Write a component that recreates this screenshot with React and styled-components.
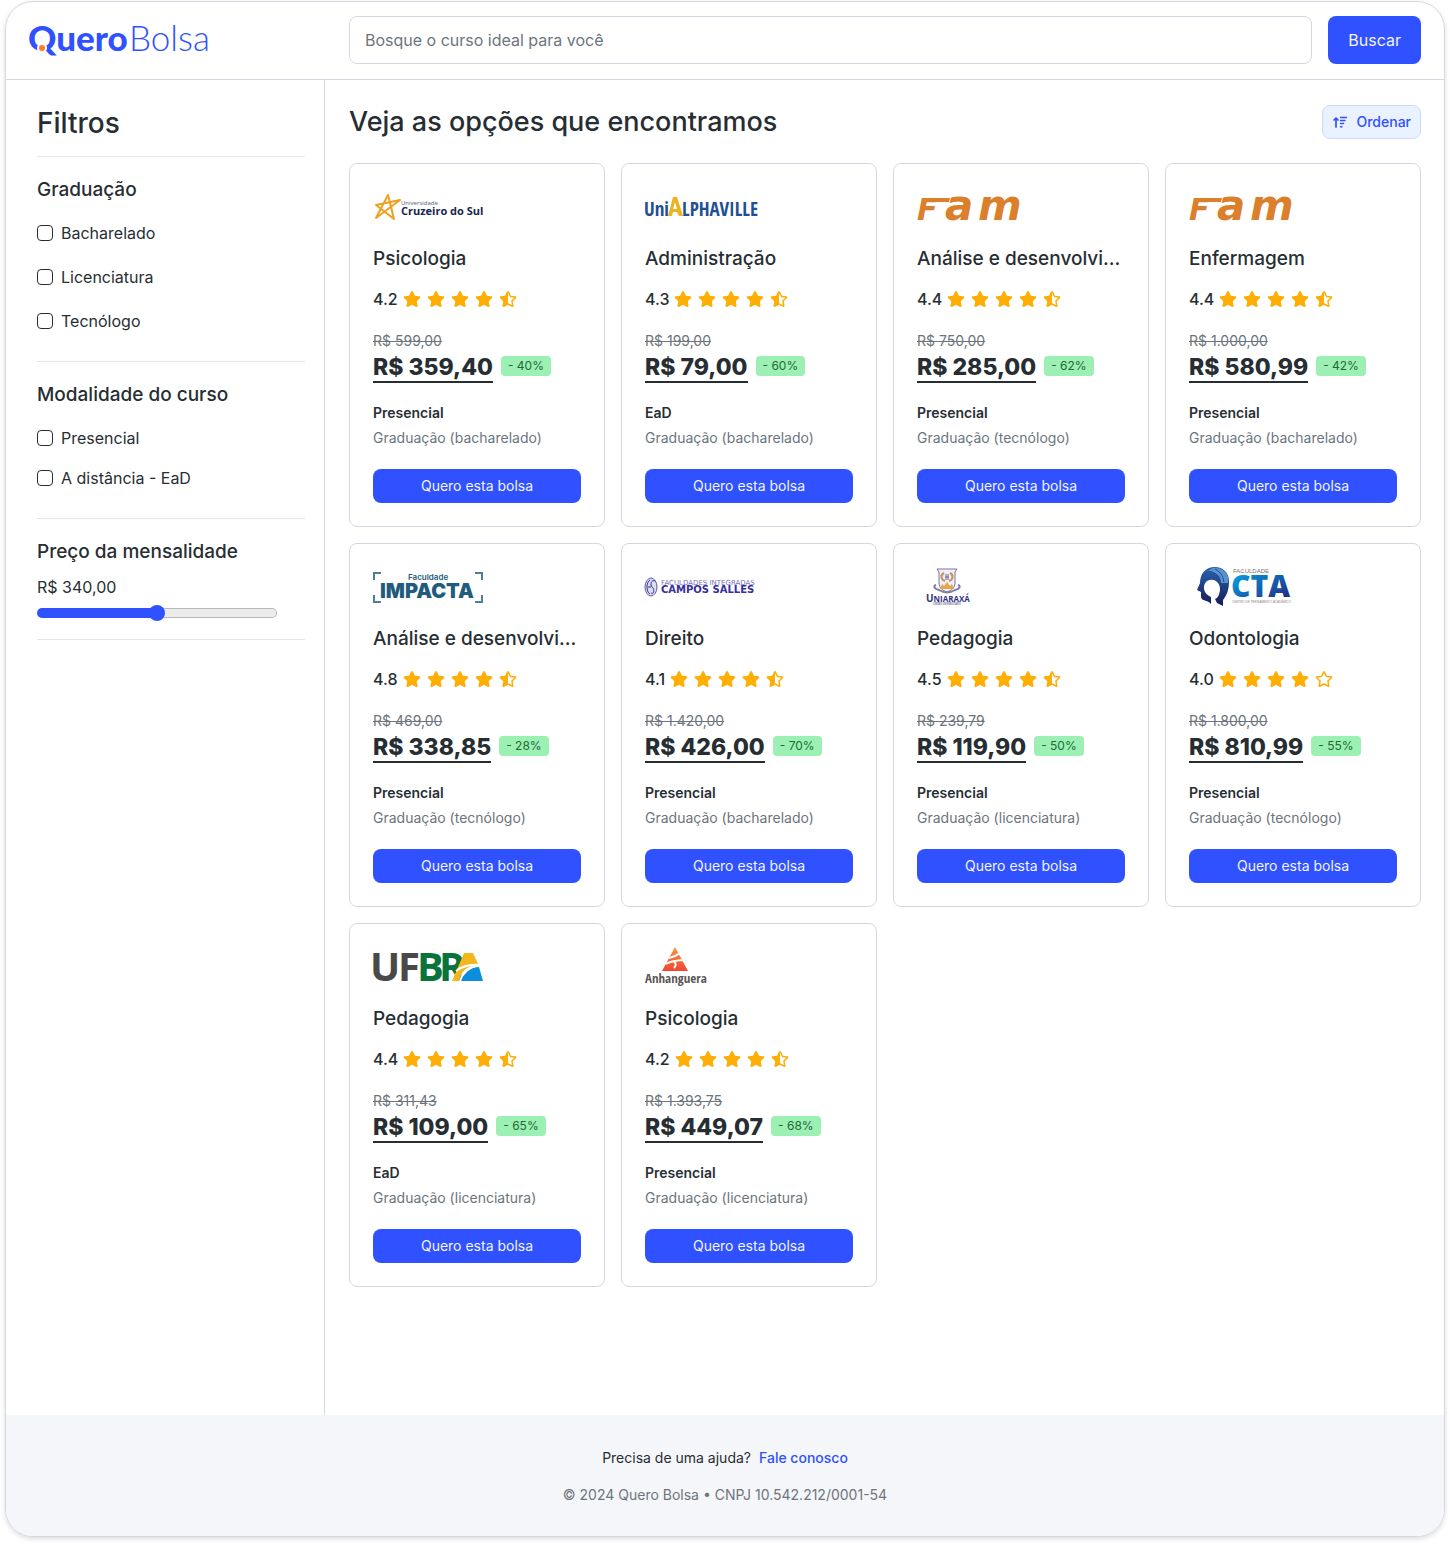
import React, { useState } from "react";
import styled, { createGlobalStyle } from "styled-components";
import { FaStar, FaStarHalfAlt, FaRegStar } from "react-icons/fa";

const color = {
  ink: "#272e33",
  muted: "#6c757d",
  blue: "#2f51ff",
  border: "#d4d8e2",
  rule: "#e5e7eb",
  star: "#ffae06",
};

const GlobalStyle = createGlobalStyle`
  *, *::before, *::after { box-sizing: border-box; }
  body {
    margin: 0;
    background: #fff;
    color: ${color.ink};
    font-family: Inter, "Liberation Sans", sans-serif;
    font-size: 16px;
  }
  h1, h2, h3, p, ul, fieldset { margin: 0; padding: 0; border: 0; }
  button, input { font: inherit; }
`;

const Page = styled.div`
  padding: 1px 5px 9px;
`;

const Frame = styled.div`
  border: 1px solid ${color.border};
  border-radius: 28px;
  overflow: hidden;
  box-shadow: 0 2px 5px rgba(0, 0, 0, 0.14);
`;

const Header = styled.header`
  display: flex;
  align-items: center;
  padding: 14px 23px 15px;
  border-bottom: 1px solid ${color.border};
`;

const Brand = styled.a`
  flex: 0 0 320px;
  height: 48px;
  svg { display: block; }
`;

const SearchForm = styled.form`
  flex: 1;
  display: flex;
  gap: 16px;
`;

const SearchInput = styled.input`
  flex: 1;
  min-width: 0;
  height: 48px;
  padding: 0 15px;
  border: 1px solid ${color.border};
  border-radius: 8px;
  background: #fff;
  color: ${color.ink};
  &::placeholder { color: ${color.muted}; opacity: 1; }
`;

const PrimaryButton = styled.button`
  height: ${(p) => (p.$small ? 34 : 48)}px;
  padding: ${(p) => (p.$small ? "0 20px 2px" : "0 20px")};
  border: 0;
  border-radius: 8px;
  background: ${color.blue};
  color: #f2f5ff;
  font-size: ${(p) => (p.$small ? 14 : 16)}px;
  cursor: pointer;
`;

const Layout = styled.div`
  display: grid;
  grid-template-columns: 319px 1fr;
`;

const Sidebar = styled.aside`
  padding: 25px 19px 24px 31px;
  border-right: 1px solid ${color.border};
`;

const Heading = styled.h1`
  font-size: ${(p) => (p.$large ? 28 : 27)}px;
  line-height: 36px;
  font-weight: 500;
`;

const FilterTop = styled.div`
  padding-bottom: 15px;
  border-bottom: 1px solid ${color.rule};
`;

const FilterGroup = styled.fieldset`
  min-width: 0;
  padding: 21px 0 ${(p) => p.$bottom}px;
  border-bottom: 1px solid ${color.rule};
`;

const FilterTitle = styled.legend`
  float: left;
  width: 100%;
  padding: 0;
  font-size: 19px;
  line-height: 24px;
  font-weight: 500;
`;

const Options = styled.div`
  clear: both;
  display: flex;
  flex-direction: column;
  gap: ${(p) => p.$gap}px;
  padding-top: 19px;
`;

const Option = styled.label`
  display: flex;
  align-items: center;
  gap: 8px;
  line-height: 24px;
`;

const Checkbox = styled.input`
  appearance: none;
  width: 16px;
  height: 16px;
  margin: 0;
  border: 1px solid ${color.ink};
  border-radius: 4px;
  &:checked { background: ${color.blue}; border-color: ${color.blue}; }
`;

const PriceFilter = styled.label`
  clear: both;
  display: flex;
  flex-direction: column;
  padding-top: 11px;
  line-height: 24px;
`;

const Range = styled.input`
  appearance: none;
  width: 240px;
  height: 16px;
  margin: 6px 0 0;
  background: transparent;
  &::-webkit-slider-runnable-track {
    height: 10px;
    border: 1px solid transparent;
    border-radius: 5px;
    background:
      linear-gradient(${color.blue}, ${color.blue}) 0 0 / var(--fill) 100% no-repeat border-box,
      linear-gradient(#ececec, #ececec) padding-box,
      linear-gradient(#b8b8b8, #b8b8b8) border-box;
  }
  &::-webkit-slider-thumb {
    appearance: none;
    width: 16px;
    height: 16px;
    margin-top: -4px;
    border-radius: 50%;
    background: ${color.blue};
  }
`;

const Main = styled.main`
  min-width: 0;
  padding: 24px 23px 128px 24px;
`;

const MainTop = styled.div`
  display: flex;
  align-items: center;
  justify-content: space-between;
  padding-bottom: 23px;
`;

const SortButton = styled.button`
  display: flex;
  align-items: center;
  gap: 8px;
  height: 34px;
  padding: 0 9px 2px;
  border: 1px solid #c8dbfd;
  border-radius: 8px;
  background: #ebf2ff;
  color: ${color.blue};
  font-size: 14px;
  font-weight: 500;
`;

const Grid = styled.ul`
  display: grid;
  grid-template-columns: repeat(auto-fill, minmax(240px, 1fr));
  gap: 16px;
  list-style: none;
`;

const Card = styled.li`
  display: flex;
  flex-direction: column;
  min-width: 0;
  padding: 23px;
  border: 1px solid ${color.border};
  border-radius: 8px;
`;

const LogoBox = styled.div`
  height: 40px;
  svg { display: block; overflow: visible; }
`;

const CourseName = styled.h2`
  margin-top: 17px;
  font-size: 19px;
  line-height: 30px;
  font-weight: 500;
  white-space: nowrap;
  overflow: hidden;
  text-overflow: ellipsis;
`;

const Rating = styled.div`
  display: flex;
  align-items: center;
  gap: 5px;
  margin-top: 13px;
  line-height: 24px;
  font-weight: 500;
`;

const Stars = styled.span`
  display: flex;
  gap: 6px;
  color: ${color.star};
  svg { display: block; width: 18px; height: 16px; }
`;

const OldPrice = styled.s`
  margin-top: 20px;
  color: ${color.muted};
  font-size: 14px;
  line-height: 20px;
`;

const PriceRow = styled.div`
  display: flex;
  align-items: flex-start;
  gap: 8px;
  height: 32px;
`;

const Price = styled.strong`
  height: 32px;
  border-bottom: 2px solid ${color.ink};
  font-size: 23px;
  line-height: 32px;
  font-weight: 800;
`;

const Discount = styled.span`
  margin-top: 5px;
  padding: 0 7px;
  border-radius: 4px;
  background: #9df0b4;
  color: #1c6b36;
  font-size: 12px;
  line-height: 20px;
`;

const Mode = styled.strong`
  margin-top: 20px;
  font-size: 14px;
  line-height: 20px;
  font-weight: 600;
`;

const Degree = styled.span`
  margin: 5px 0 21px;
  color: ${color.muted};
  font-size: 14px;
  line-height: 20px;
`;

const Footer = styled.footer`
  display: flex;
  flex-direction: column;
  align-items: center;
  gap: 17px;
  padding: 33px 24px 31px;
  background: #f5f6f9;
  font-size: 14px;
  line-height: 20px;
`;

const HelpLine = styled.p`
  display: flex;
  gap: 8px;
`;

const HelpLink = styled.a`
  color: ${color.blue};
  font-weight: 500;
  text-decoration: none;
`;

const Legal = styled.p`
  color: ${color.muted};
`;

function QueroBolsaLogo() {
  return (
    <svg width="190" height="48" viewBox="0 0 190 48" fill={color.blue} fontFamily="Lato, sans-serif">
      <text x="-1" y="35" fontSize="35" fontWeight="900">Quero</text>
      <text x="100" y="35" fontSize="35" fontWeight="300">Bolsa</text>
      <circle cx="13" cy="32" r="5" fill="#fff" />
      <circle cx="13" cy="32" r="3" fill="#ff7a2e" />
    </svg>
  );
}

function CruzeiroLogo() {
  return (
    <svg width="110" height="40" viewBox="0 0 110 40" role="img" aria-label="Cruzeiro do Sul">
      <path d="M15 8 L21 32 L3 18 L27 13 L3 31 Z" fill="none" stroke="#eda320" strokeWidth="2" strokeLinejoin="round" />
      <text x="28" y="18" fontFamily="Open Sans, sans-serif" fontSize="6" fill="#4b5a7c">Universidade</text>
      <text x="28" y="28" fontFamily="Open Sans, sans-serif" fontSize="11" fontWeight="700" fill="#16264f">Cruzeiro do Sul</text>
    </svg>
  );
}

function AlphavilleLogo() {
  return (
    <svg width="110" height="40" viewBox="0 0 110 40" fontFamily="Open Sans Condensed, Open Sans, sans-serif" fontSize="19" fontWeight="700" fill="#214f93">
      <text x="-1" y="29">Uni</text>
      <path d="M28 10 H32 L38 29 H34 L32 25 H28 L27 29 H23 Z M30 15 L28 22 H32 Z" fill="#ecb220" fillRule="evenodd" />
      <text x="37" y="29">LPHAVILLE</text>
    </svg>
  );
}

function FamLogo() {
  return (
    <svg width="110" height="40" viewBox="0 0 110 40" fontFamily="DejaVu Sans, sans-serif" fontWeight="700" fontStyle="italic" fill="#dc7f2c">
      <text x="0" y="33" fontSize="30">F</text>
      <path d="M18 11 H33 L32 15 H17 Z" />
      <text x="28" y="33" fontSize="42">a</text>
      <text x="61" y="33" fontSize="42">m</text>
    </svg>
  );
}

function ImpactaLogo() {
  return (
    <svg width="110" height="40" viewBox="0 0 110 40" fill="#215c7c" fontFamily="Inter, sans-serif">
      <path d="M1 13 V6 H8 M102 6 H109 V13 M1 28 V35 H8 M102 35 H109 V28" fill="none" stroke="#4d7f98" strokeWidth="2" />
      <text x="35" y="13" fontSize="8" fontWeight="600">Faculdade</text>
      <text x="7" y="31" fontSize="20" fontWeight="900">IMPACTA</text>
    </svg>
  );
}

function CamposSallesLogo() {
  return (
    <svg width="110" height="40" viewBox="0 0 110 40" fontFamily="DejaVu Sans, sans-serif">
      <ellipse cx="6" cy="20" rx="6" ry="9" fill="#dcdcf2" stroke="#5c55a8" strokeWidth="1" />
      <path d="M5 13 C1 15 1 25 5 27 M10 14 C6 12 5 18 7 20 C10 22 9 28 6 26 M3 20 H6" fill="none" stroke="#352e93" strokeWidth="1" />
      <text x="16" y="18" fontSize="7" fill="#7771b9">FACULDADES INTEGRADAS</text>
      <text x="16" y="26" fontSize="10" fontWeight="700" fill="#352e9b">CAMPOS SALLES</text>
    </svg>
  );
}

function UniaraxaLogo() {
  return (
    <svg width="60" height="40" viewBox="0 0 60 40">
      <path d="M20 2 H40 L38 5 V17 Q37 23 30 25 Q23 23 22 17 V5 Z" fill="#f0eff5" stroke="#77789f" strokeWidth="1" />
      <path d="M27 6 C23 8 24 13 28 14 M33 6 C37 8 36 13 32 14" fill="none" stroke="#c99159" strokeWidth="2" />
      <path d="M29 7 V13 M31 7 V13 M28 10 H32" stroke="#6b6b9b" strokeWidth="1" />
      <path d="M23 22 L25 17 L27 19 L30 15 L33 19 L35 17 L37 22 Z" fill="#e9a54e" />
      <path d="M19 18 C16 19 17 22 22 23 Q30 28 38 23 C43 22 44 19 41 18" fill="none" stroke="#7f7fa5" strokeWidth="2" />
      <text x="9" y="35" fontFamily="Open Sans, sans-serif" fontWeight="700" fontSize="8" fill="#33347f"><tspan fontSize="10">U</tspan>NIARAXÁ</text>
      <text x="16" y="38" fontFamily="Open Sans Condensed, Open Sans, sans-serif" fontSize="3" fill="#777aa5">CENTRO UNIVERSITÁRIO</text>
    </svg>
  );
}

function CtaLogo() {
  return (
    <svg width="110" height="40" viewBox="0 0 110 40">
      <defs>
        <linearGradient id="cta-text" x1="0" y1="0" x2="1" y2="1">
          <stop offset="0.2" stopColor="#0796d8" />
          <stop offset="1" stopColor="#251b78" />
        </linearGradient>
        <linearGradient id="cta-head" x1="0" y1="0" x2="0" y2="1">
          <stop offset="0" stopColor="#2963ae" />
          <stop offset="1" stopColor="#171a58" />
        </linearGradient>
      </defs>
      <path d="M26 0 C16 0 11 7 11 16 L8 23 L12 25 V30 C13 35 18 32 22 37 L22 30 C14 27 13 18 18 14 C24 11 30 14 31 21 C31 27 29 31 26 32 L28 36 L34 39 L34 33 C38 28 40 22 40 14 C40 6 34 0 26 0 Z" fill="url(#cta-head)" />
      <path d="M24 1 C35 0 41 8 39 16 H32 C32 9 28 5 18 4 Z" fill="#5d91ce" />
      <path d="M19 4 Q29 5 31 15 M26 2 Q34 6 35 15" stroke="#244f9a" strokeWidth="1" fill="none" />
      <text x="44" y="6" fontFamily="Liberation Sans, sans-serif" fontSize="6" fill="#777">FACULDADE</text>
      <text x="42" y="30" fontFamily="Open Sans, sans-serif" fontSize="30" fontWeight="800" fill="url(#cta-text)">CTA</text>
      <text x="43" y="36" fontFamily="Liberation Sans, sans-serif" fontSize="3" fill="#888">CENTRO DE TREINAMENTO ACADÊMICO</text>
    </svg>
  );
}

function UfbraLogo() {
  return (
    <svg width="110" height="40" viewBox="0 0 110 40" fontFamily="Open Sans, sans-serif" fontSize="40" fontWeight="700">
      <text x="-3" y="34" fill="#4b4947">U</text>
      <text x="25" y="34" fill="#4b4947">F</text>
      <text x="44" y="34" fill="#08733a">B</text>
      <text x="66" y="34" fill="#08733a">R</text>
      <path d="M91 6 H100 L106 19 C95 17 88 24 86 34 H79 Z" fill="#f3b61d" />
      <path d="M88 34 C90 25 98 20 106 20 L110 34 Z" fill="#0b8fdc" />
      <path d="M83 24 Q92 17 106 18 Q91 21 87 34" fill="none" stroke="#fff" strokeWidth="2" />
    </svg>
  );
}

function AnhangueraLogo() {
  return (
    <svg width="62" height="40" viewBox="0 0 62 40">
      <defs>
        <linearGradient id="anhanguera" x1="0" y1="0" x2="0" y2="1">
          <stop offset="0" stopColor="#f69a3c" />
          <stop offset="1" stopColor="#ee4635" />
        </linearGradient>
      </defs>
      <path d="M30 0 L43 24 H17 Z" fill="url(#anhanguera)" />
      <path d="M24 11 Q30 10 35 6 M21 17 Q25 14 38 13 M28 14 Q33 17 29 21" fill="none" stroke="#fff" strokeWidth="2" />
      <text x="0" y="36" fontFamily="Open Sans Condensed, Open Sans, sans-serif" fontSize="13" fill="#5b5757">Anhanguera</text>
    </svg>
  );
}

function SortIcon() {
  return (
    <svg width="16" height="14" viewBox="0 0 16 14" fill="none" stroke="currentColor" strokeLinecap="round" strokeLinejoin="round">
      <path d="M4 13 V4 M2 6 L4 4 L6 6" strokeWidth="1.7" />
      <path d="M8.5 3.5 H14.5 M8.5 6.5 H13 M8.5 9.5 H11.5 M8.5 12.7 H10" strokeWidth="1.4" />
    </svg>
  );
}

const offers = [
  { logo: CruzeiroLogo, course: "Psicologia", rating: "4.2", old: "599,00", price: "359,40", off: 40, mode: "Presencial", degree: "bacharelado" },
  { logo: AlphavilleLogo, course: "Administração", rating: "4.3", old: "199,00", price: "79,00", off: 60, mode: "EaD", degree: "bacharelado" },
  { logo: FamLogo, course: "Análise e desenvolvimento de sistemas", rating: "4.4", old: "750,00", price: "285,00", off: 62, mode: "Presencial", degree: "tecnólogo" },
  { logo: FamLogo, course: "Enfermagem", rating: "4.4", old: "1.000,00", price: "580,99", off: 42, mode: "Presencial", degree: "bacharelado" },
  { logo: ImpactaLogo, course: "Análise e desenvolvimento de sistemas", rating: "4.8", old: "469,00", price: "338,85", off: 28, mode: "Presencial", degree: "tecnólogo" },
  { logo: CamposSallesLogo, course: "Direito", rating: "4.1", old: "1.420,00", price: "426,00", off: 70, mode: "Presencial", degree: "bacharelado" },
  { logo: UniaraxaLogo, course: "Pedagogia", rating: "4.5", old: "239,79", price: "119,90", off: 50, mode: "Presencial", degree: "licenciatura" },
  { logo: CtaLogo, course: "Odontologia", rating: "4.0", old: "1.800,00", price: "810,99", off: 55, mode: "Presencial", degree: "tecnólogo" },
  { logo: UfbraLogo, course: "Pedagogia", rating: "4.4", old: "311,43", price: "109,00", off: 65, mode: "EaD", degree: "licenciatura" },
  { logo: AnhangueraLogo, course: "Psicologia", rating: "4.2", old: "1.393,75", price: "449,07", off: 68, mode: "Presencial", degree: "licenciatura" },
];

function OfferCard({ offer }) {
  const Logo = offer.logo;
  const Last = offer.rating === "4.0" ? FaRegStar : FaStarHalfAlt;
  return (
    <Card>
      <LogoBox><Logo /></LogoBox>
      <CourseName>{offer.course}</CourseName>
      <Rating>
        {offer.rating}
        <Stars><FaStar /><FaStar /><FaStar /><FaStar /><Last /></Stars>
      </Rating>
      <OldPrice>R$ {offer.old}</OldPrice>
      <PriceRow>
        <Price>R$ {offer.price}</Price>
        <Discount>- {offer.off}%</Discount>
      </PriceRow>
      <Mode>{offer.mode}</Mode>
      <Degree>Graduação ({offer.degree})</Degree>
      <PrimaryButton type="button" $small>Quero esta bolsa</PrimaryButton>
    </Card>
  );
}

function CheckGroup({ title, items, gap }) {
  return (
    <FilterGroup $bottom={28}>
      <FilterTitle>{title}</FilterTitle>
      <Options $gap={gap}>
        {items.map((item) => (
          <Option key={item}>
            <Checkbox type="checkbox" />
            {item}
          </Option>
        ))}
      </Options>
    </FilterGroup>
  );
}

const MAX_PRICE = 680;

export default function App() {
  const [price, setPrice] = useState(340);
  return (
    <Page>
      <GlobalStyle />
      <Frame>
        <Header>
          <Brand href="#" aria-label="Quero Bolsa"><QueroBolsaLogo /></Brand>
          <SearchForm onSubmit={(e) => e.preventDefault()}>
            <SearchInput type="text" aria-label="Bosque o curso ideal para você" placeholder="Bosque o curso ideal para você" />
            <PrimaryButton type="submit">Buscar</PrimaryButton>
          </SearchForm>
        </Header>
        <Layout>
          <Sidebar>
            <FilterTop><Heading as="h2" $large>Filtros</Heading></FilterTop>
            <CheckGroup title="Graduação" items={["Bacharelado", "Licenciatura", "Tecnólogo"]} gap={20} />
            <CheckGroup title="Modalidade do curso" items={["Presencial", "A distância - EaD"]} gap={16} />
            <FilterGroup $bottom={18}>
              <FilterTitle>Preço da mensalidade</FilterTitle>
              <PriceFilter>
                R$ {price},00
                <Range
                  type="range"
                  min="0"
                  max={MAX_PRICE}
                  value={price}
                  style={{ "--fill": `${(price / MAX_PRICE) * 100}%` }}
                  onChange={(e) => setPrice(Number(e.target.value))}
                />
              </PriceFilter>
            </FilterGroup>
          </Sidebar>
          <Main>
            <MainTop>
              <Heading>Veja as opções que encontramos</Heading>
              <SortButton type="button"><SortIcon />Ordenar</SortButton>
            </MainTop>
            <Grid>
              {offers.map((offer, i) => <OfferCard key={i} offer={offer} />)}
            </Grid>
          </Main>
        </Layout>
        <Footer>
          <HelpLine>Precisa de uma ajuda? <HelpLink href="#">Fale conosco</HelpLink></HelpLine>
          <Legal>© 2024 Quero Bolsa • CNPJ 10.542.212/0001-54</Legal>
        </Footer>
      </Frame>
    </Page>
  );
}
